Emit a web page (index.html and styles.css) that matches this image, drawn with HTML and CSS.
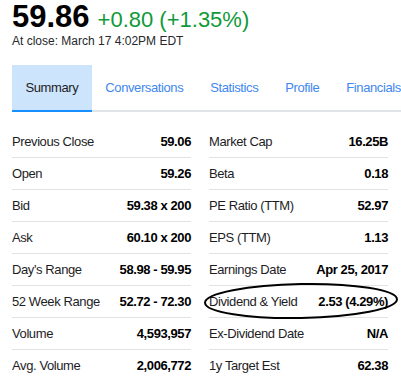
FILE: index.html
```html
<!DOCTYPE html>
<html>
<head>
  <meta charset="utf-8">
  <title>Quote Summary</title>
  <link rel="stylesheet" href="styles.css">
</head>
<body>

  <header class="quote">
    <div class="price-line">
      <span class="price">59.86</span>
      <span class="change">+0.80 (+1.35%)</span>
    </div>
    <p class="close-time">At close: March 17 4:02PM EDT</p>
  </header>

  <nav class="tabs">
    <a class="tab active" href="#">Summary</a>
    <a class="tab" href="#">Conversations</a>
    <a class="tab" href="#">Statistics</a>
    <a class="tab" href="#">Profile</a>
    <a class="tab" href="#">Financials</a>
  </nav>

  <div class="summary">
    <div class="col">
      <div class="row"><span class="label">Previous Close</span><span class="value">59.06</span></div>
      <div class="row"><span class="label">Open</span><span class="value">59.26</span></div>
      <div class="row"><span class="label">Bid</span><span class="value">59.38 x 200</span></div>
      <div class="row"><span class="label">Ask</span><span class="value">60.10 x 200</span></div>
      <div class="row"><span class="label">Day's Range</span><span class="value">58.98 - 59.95</span></div>
      <div class="row"><span class="label">52 Week Range</span><span class="value">52.72 - 72.30</span></div>
      <div class="row"><span class="label">Volume</span><span class="value">4,593,957</span></div>
      <div class="row"><span class="label">Avg. Volume</span><span class="value">2,006,772</span></div>
    </div>
    <div class="col">
      <div class="row"><span class="label">Market Cap</span><span class="value">16.25B</span></div>
      <div class="row"><span class="label">Beta</span><span class="value">0.18</span></div>
      <div class="row"><span class="label">PE Ratio (TTM)</span><span class="value">52.97</span></div>
      <div class="row"><span class="label">EPS (TTM)</span><span class="value">1.13</span></div>
      <div class="row"><span class="label">Earnings Date</span><span class="value">Apr 25, 2017</span></div>
      <div class="row"><span class="label">Dividend &amp; Yield</span><span class="value">2.53 (4.29%)</span></div>
      <div class="row"><span class="label">Ex-Dividend Date</span><span class="value">N/A</span></div>
      <div class="row"><span class="label">1y Target Est</span><span class="value">62.38</span></div>
    </div>

    <!-- hand-drawn marker round the dividend row -->
    <svg class="marker" width="200" height="42" viewBox="0 0 200 42">
      <ellipse cx="99" cy="20" rx="96" ry="17" fill="none" stroke="#000" stroke-width="2" transform="rotate(-1 99 20)"/>
    </svg>
  </div>

</body>
</html>
```

FILE: styles.css
```css
body {
  margin: 0px;
  padding-left: 12px;
  font-family: 'Liberation Sans', Arial, sans-serif;
  font-size: 13px;
  letter-spacing: -0.4px;
  color: #1d1d1f;
  background-color: #fff;
  overflow: hidden;
}
.quote {
  padding-top: 1px;
  letter-spacing: 0;
}
.price-line {
  display: flex;
  align-items: baseline;
  gap: 8px;
  line-height: 32px;
}
.price {
  font-size: 31px;
  font-weight: bold;
  color: #000;
}
.change {
  font-size: 22px;
  line-height: 26px;
  color: #109a3a;
}
.close-time {
  margin: 1px 0 0 0;
  line-height: 14px;
  font-size: 12px;
  color: #26282a;
}
.tabs {
  display: flex;
  margin-top: 17px;
  border-bottom: 2px solid #e0e4e9;
  white-space: nowrap;
}
.tab {
  display: block;
  padding: 0 13.5px;
  line-height: 45px;
  color: #4187ef;
  text-decoration: none;
  flex-shrink: 0;
}
.tab.active {
  background-color: #cce4fc;
  color: #1d1d1f;
  border-bottom: 2px solid #188fff;
  margin-bottom: -2px;
}
.summary {
  position: relative;
  display: flex;
  gap: 18px;
  margin-top: 14px;
  margin-right: 13px;
}
.col {
  flex: 1;
}
.row {
  display: flex;
  justify-content: space-between;
  align-items: center;
  box-sizing: border-box;
  height: 32px;
  line-height: 14px;
  border-bottom: 1px solid #e3e3e3;
}
.label {
  color: #1d1d1f;
}
.value {
  font-weight: bold;
  color: #000;
}
.marker {
  position: absolute;
  left: 190px;
  top: 155px;
}
```
